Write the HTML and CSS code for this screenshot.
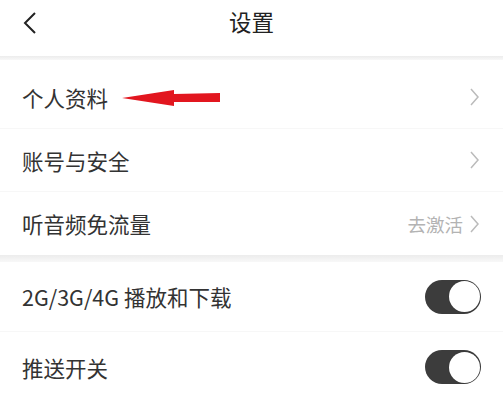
FILE: index.html
```html
<!DOCTYPE html>
<html lang="zh-CN">
<head>
    <meta charset="UTF-8">
    <meta name="viewport" content="width=device-width, initial-scale=1.0">
    <title>设置</title>
    <link rel="stylesheet" href="styles.css">
</head>
<body>
    <div class="header">
        <svg class="back" width="14" height="24" viewBox="0 0 14 24">
            <path d="M12 2 L2 12 L12 22" fill="none" stroke="#222" stroke-width="2"/>
        </svg>
        <div class="title">设置</div>
    </div>
    <div class="band"></div>

    <div class="group">
        <div class="row">
            <span class="label">个人资料</span>
            <svg class="pointer" width="100" height="16" viewBox="0 0 100 16">
                <polygon points="0,8 52,0 52,4 98,3 98,12 52,12 52,16" fill="#e2161f"/>
            </svg>
            <span class="more">
                <svg width="11" height="20" viewBox="0 0 11 20"><path d="M2 2 L9 10 L2 18" fill="none" stroke="#bbb" stroke-width="1.5"/></svg>
            </span>
        </div>
        <div class="row">
            <span class="label">账号与安全</span>
            <span class="more">
                <svg width="11" height="20" viewBox="0 0 11 20"><path d="M2 2 L9 10 L2 18" fill="none" stroke="#bbb" stroke-width="1.5"/></svg>
            </span>
        </div>
        <div class="row">
            <span class="label">听音频免流量</span>
            <span class="more">
                <span class="hint">去激活</span>
                <svg width="11" height="20" viewBox="0 0 11 20"><path d="M2 2 L9 10 L2 18" fill="none" stroke="#bbb" stroke-width="1.5"/></svg>
            </span>
        </div>
    </div>
    <div class="band thick"></div>

    <div class="group">
        <div class="row tall">
            <span class="label">2G/3G/4G 播放和下载</span>
            <span class="switch on"><span class="knob"></span></span>
        </div>
        <div class="row tall">
            <span class="label">推送开关</span>
            <span class="switch on"><span class="knob"></span></span>
        </div>
    </div>
</body>
</html>
```

FILE: styles.css
```css
body {
    margin: 0;
    background-color: #fff;
    font-family: 'Noto Sans CJK SC', 'Noto Sans', sans-serif;
    color: #333;
    overflow: hidden;
}

.header {
    position: relative;
    height: 56px;
    display: flex;
    align-items: center;
    justify-content: center;
}

.back {
    position: absolute;
    left: 23px;
    top: 11px;
}

.title {
    font-size: 22.5px;
    color: #222;
    margin-top: -14px;
}

.band {
    height: 4px;
    background: linear-gradient(#ececec, #f8f8f8);
    margin-bottom: 6px;
}

.band.thick {
    height: 7px;
    background-color: #f8f8f8;
    margin-bottom: 0;
}

.row {
    height: 63px;
    box-sizing: border-box;
    display: flex;
    align-items: center;
    padding: 0 22px;
    border-bottom: 1px solid #f7f7f7;
}

.row:last-child {
    border-bottom: none;
}

.row.tall {
    height: 70px;
}

.label {
    font-size: 21.5px;
    color: #333;
}

.pointer {
    margin-left: 14px;
    margin-top: 1px;
}

.more {
    margin-left: auto;
    display: flex;
    align-items: center;
    gap: 6px;
    margin-right: 1px;
}

.hint {
    font-size: 18.5px;
    color: #b3b3b3;
}

.switch {
    margin-left: auto;
    width: 56px;
    height: 34px;
    border-radius: 17px;
    background-color: #3c3c3c;
    display: flex;
    align-items: center;
    justify-content: flex-end;
    padding: 0 1px;
    box-sizing: border-box;
}

.knob {
    width: 31px;
    height: 31px;
    border-radius: 50%;
    background-color: #fff;
    box-shadow: 0 0 1px rgba(0, 0, 0, 0.4);
}
```
